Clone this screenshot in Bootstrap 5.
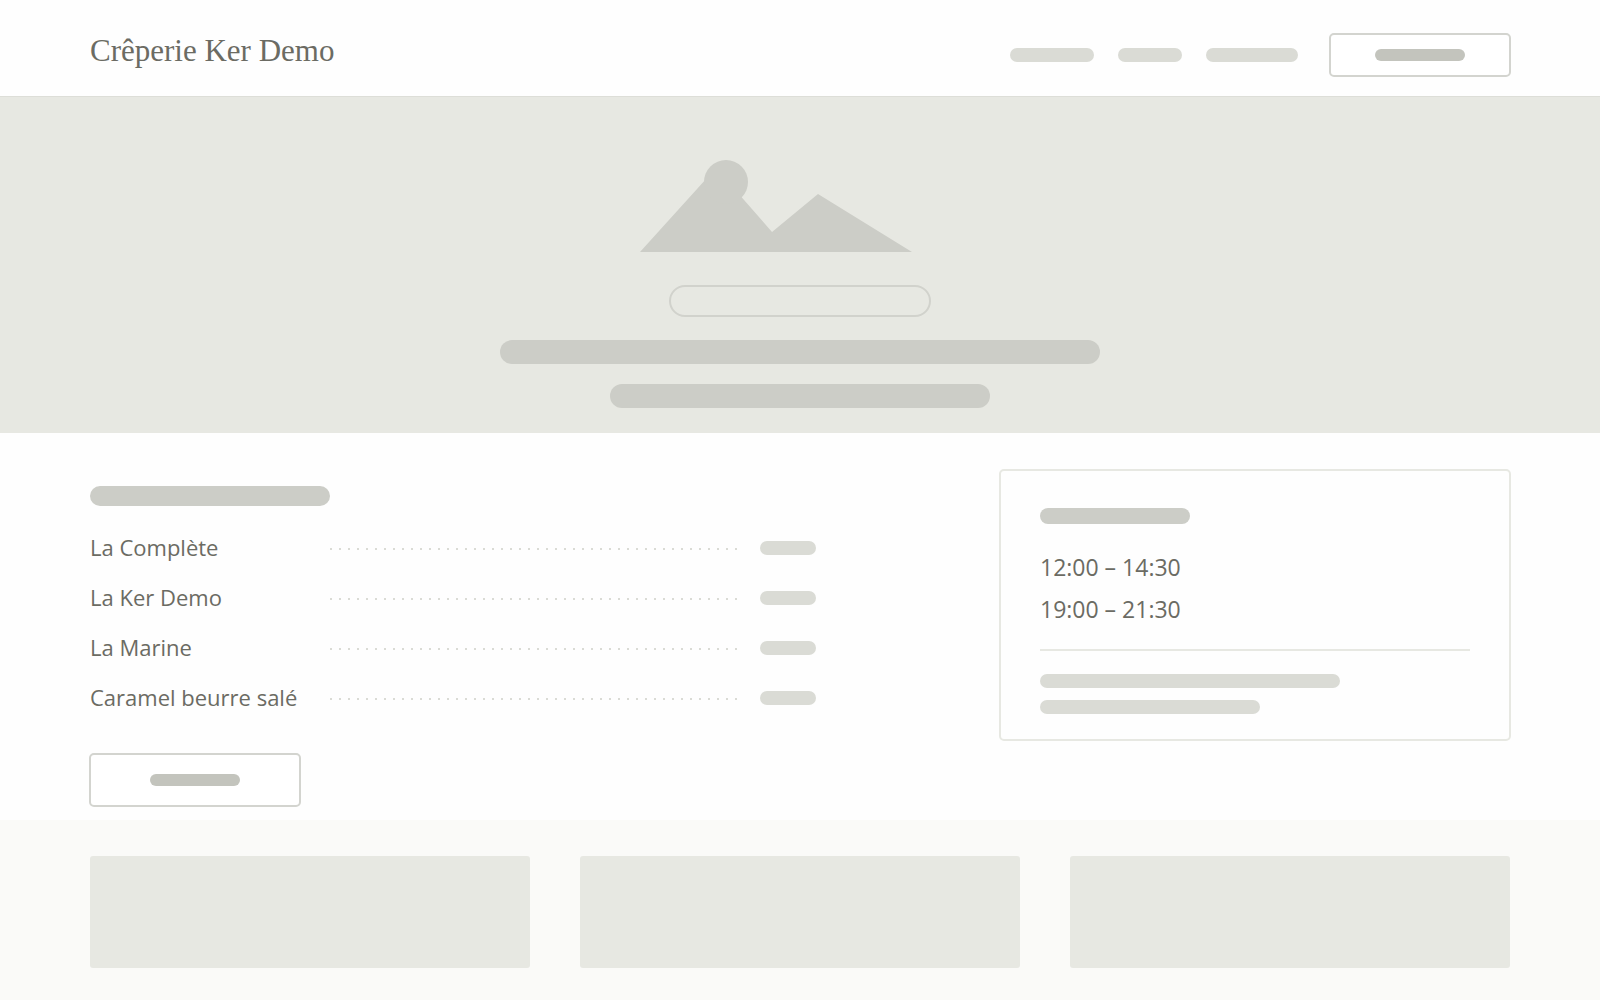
<!DOCTYPE html>
<html lang="fr">
<head>
<meta charset="utf-8">
<meta name="viewport" content="width=device-width, initial-scale=1">
<title>Crêperie Ker Demo</title>
<link href="https://cdn.jsdelivr.net/npm/bootstrap@5.3.0/dist/css/bootstrap.min.css" rel="stylesheet">
<style>
  :root {
    --ink: #6b6b63;
    --tone-1: #e7e8e2;
    --tone-2: #dadbd5;
    --tone-3: #cccdc7;
    --tone-4: #c3c4bd;
  }
  body { font-family: "Open Sans", "Noto Sans", sans-serif; font-size: 22px; line-height: 30px; color: var(--ink); background: #fefefe; }
  .gutter { padding-left: 90px; padding-right: 90px; }
  .site-header { height: 96px; padding-top: 6px; }
  .site-name { font-family: Georgia, "Liberation Serif", serif; font-size: 31px; line-height: 36px; color: var(--ink); }
  .site-nav { gap: 24px; padding-top: 8px; }
  .bar { display: block; height: 14px; border-radius: 7px; background: var(--tone-2); max-width: 100%; }
  .bar-title { height: 24px; border-radius: 12px; background: var(--tone-3); }
  .bar-section { height: 20px; border-radius: 10px; background: var(--tone-3); }
  .bar-card { height: 16px; border-radius: 8px; background: var(--tone-3); }
  .bar-label { height: 12px; border-radius: 6px; background: var(--tone-4); width: 90px; }
  .w-56 { width: 56px; } .w-64 { width: 64px; } .w-84 { width: 84px; } .w-92 { width: 92px; }
  .w-150 { width: 150px; } .w-220 { width: 220px; } .w-240 { width: 240px; } .w-300 { width: 300px; }
  .w-380 { width: 380px; } .w-600 { width: 600px; }
  .ghost-btn { background: #fff; border: 0; border-radius: 4px; outline: 2px solid #d3d4cf; outline-offset: -1px; display: flex; align-items: center; justify-content: center; }
  .ghost-sm { width: 180px; height: 42px; margin-left: 8px; }
  .ghost-lg { width: 210px; height: 52px; }
  .hero { background: var(--tone-1); border-top: 1px solid #dddeD8; padding: 63px 24px 25px; }
  .hero-art { width: 272px; height: 92px; margin-right: 48px; fill: var(--tone-3); }
  .hero-lines { gap: 20px; }
  .tagline { width: 260px; height: 30px; border-radius: 15px; outline: 2px solid #d1d2cc; outline-offset: -1px; margin: 34px 0 24px; }
  .menu-area { padding-top: 37px; padding-bottom: 14px; gap: 48px; }
  .menu-col { width: 726px; padding-top: 16px; }
  .menu-list { margin: 17px 0 31px; }
  .menu-list li { height: 50px; }
  .dish { width: 240px; padding-bottom: 2px; }
  .leader { height: 4px; margin-right: 22px; background: repeating-linear-gradient(90deg, var(--tone-2) 0 2px, transparent 2px 9px) bottom / 100% 2px no-repeat; }
  .hours { width: 510px; border-radius: 4px; outline: 2px solid var(--tone-1); outline-offset: -1px; padding: 38px 40px 26px; }
  .hours-times { font-size: 23px; line-height: 42px; margin: 22px 0 19px; }
  .rule { height: 2px; background: var(--tone-1); margin-bottom: 23px; }
  .note-lines { gap: 12px; }
  .gallery { background: #fafaf8; padding-top: 36px; padding-bottom: 32px; }
  .gallery-row { --bs-gutter-x: 50px; }
  .tile { height: 112px; border-radius: 3px; background: var(--tone-1); }
</style>
<script src="https://cdn.jsdelivr.net/npm/bootstrap@5.3.0/dist/js/bootstrap.bundle.min.js"></script>
</head>
<body>
<header class="site-header gutter d-flex align-items-center justify-content-between">
  <h1 class="site-name fw-normal mb-0">Crêperie Ker Demo</h1>
  <nav class="site-nav d-flex align-items-center" aria-label="Navigation">
    <a class="bar w-84" href="#menu" aria-label="La carte"></a>
    <a class="bar w-64" href="#hours" aria-label="Horaires"></a>
    <a class="bar w-92" href="#gallery" aria-label="Galerie"></a>
    <button class="ghost-btn ghost-sm" type="button" aria-label="Réserver"><span class="bar bar-label"></span></button>
  </nav>
</header>

<main>
  <section class="hero d-flex flex-column align-items-center">
    <svg class="hero-art" viewBox="640 160 272 92" aria-hidden="true">
      <path d="M640 252L716 168L772 232L818 194L912 252Z"/>
      <circle cx="726" cy="182" r="22"/>
    </svg>
    <div class="tagline"></div>
    <div class="hero-lines d-flex flex-column align-items-center">
      <span class="bar bar-title w-600"></span>
      <span class="bar bar-title w-380"></span>
    </div>
  </section>

  <section class="menu-area gutter d-flex align-items-start justify-content-between" id="menu">
    <div class="menu-col">
      <span class="bar bar-section w-240"></span>
      <ul class="menu-list list-unstyled">
        <li class="d-flex align-items-center"><span class="dish">La Complète</span><span class="leader flex-fill"></span><span class="bar w-56"></span></li>
        <li class="d-flex align-items-center"><span class="dish">La Ker Demo</span><span class="leader flex-fill"></span><span class="bar w-56"></span></li>
        <li class="d-flex align-items-center"><span class="dish">La Marine</span><span class="leader flex-fill"></span><span class="bar w-56"></span></li>
        <li class="d-flex align-items-center"><span class="dish">Caramel beurre salé</span><span class="leader flex-fill"></span><span class="bar w-56"></span></li>
      </ul>
      <button class="ghost-btn ghost-lg" type="button" aria-label="Voir la carte"><span class="bar bar-label"></span></button>
    </div>
    <aside class="hours" id="hours">
      <span class="bar bar-card w-150"></span>
      <div class="hours-times">
        <p class="mb-0">12:00 – 14:30</p>
        <p class="mb-0">19:00 – 21:30</p>
      </div>
      <div class="rule"></div>
      <div class="note-lines d-flex flex-column">
        <span class="bar w-300"></span>
        <span class="bar w-220"></span>
      </div>
    </aside>
  </section>

  <section class="gallery gutter" id="gallery">
    <div class="row gallery-row">
      <div class="col-4"><div class="tile"></div></div>
      <div class="col-4"><div class="tile"></div></div>
      <div class="col-4"><div class="tile"></div></div>
    </div>
  </section>
</main>
</body>
</html>
